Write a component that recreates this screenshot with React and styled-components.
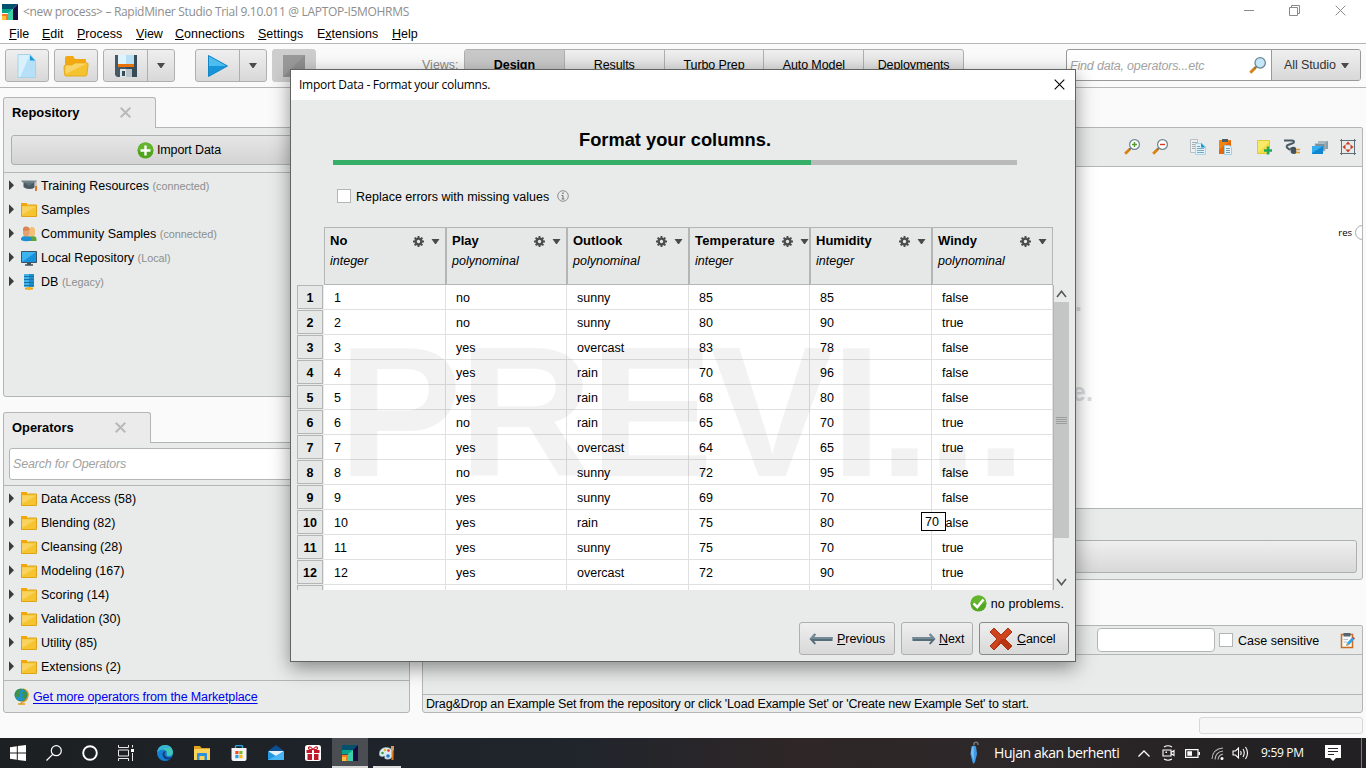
import React from "react";
import styled, { createGlobalStyle, css } from "styled-components";

const LINE = "#b4b6b6";
const PANEL = "#e8ebea";
const SANS = '"Liberation Sans", Arial, sans-serif';
const UI = '"Open Sans", "Noto Sans", sans-serif';

const Global = createGlobalStyle`
  * { box-sizing: border-box; }
  body { margin: 0; overflow: hidden; font-family: ${SANS}; font-size: 12.5px; color: #000; }
  svg { display: block; flex: none; }
`;

const Screen = styled.div`
  position: relative;
  width: 1366px;
  height: 768px;
  overflow: hidden;
  display: flex;
  flex-direction: column;
  background: #fafafa;
  white-space: nowrap;
`;

/* ---------- window chrome ---------- */
const TitleBar = styled.header`
  height: 24px;
  background: #fff;
  display: flex;
  align-items: center;
  padding: 0 20px 0 2px;
  color: #8e8e8e;
`;
const WindowTitle = styled.span`
  font: 12px/24px ${UI};
  letter-spacing: ${(p) => p.$ls || "-0.31px"};
  margin-left: 5px;
  flex: 1;
`;
const WindowControls = styled.div`
  display: flex;
  gap: 35px;
  margin-top: -3px;
`;
const MenuBar = styled.nav`
  height: 20px;
  background: #fff;
  border-bottom: 1px solid ${LINE};
  display: flex;
  padding-left: 9px;
`;
const MenuItem = styled.span`
  width: ${(p) => p.$w}px;
  line-height: 20px;
`;

/* ---------- toolbar ---------- */
const Toolbar = styled.div`
  height: 44px;
  border-bottom: 1px solid ${LINE};
  display: flex;
  align-items: flex-start;
  padding: 5px 5px 0;
`;
const raised = css`
  border: 1px solid #aeb0b0;
  border-radius: 3px;
  background: linear-gradient(#efefef, #d8d8d8);
`;
const ToolButton = styled.div`
  ${raised}
  width: ${(p) => p.$w || 44}px;
  height: 33px;
  margin-right: ${(p) => p.$gap ?? 5}px;
  display: flex;
  align-items: center;
  justify-content: center;
  ${(p) => p.$disabled && css`background: #cdcdcd; border-color: #cdcdcd;`}
`;
const Half = styled.div`
  width: ${(p) => p.$w}px;
  height: 31px;
  display: flex;
  align-items: center;
  justify-content: center;
  & + & { border-left: 1px solid #aeb0b0; }
`;
const ViewsLabel = styled.span`
  width: 42px;
  margin-left: 106px;
  line-height: 33px;
  color: #8a8a8a;
`;
const ViewTabs = styled.div`
  ${raised}
  display: flex;
  width: 500px;
  height: 33px;
  overflow: hidden;
`;
const ViewTab = styled.div`
  flex: 1;
  text-align: center;
  line-height: 30px;
  letter-spacing: -0.1px;
  border-right: 1px solid #aeb0b0;
  &:last-child { border-right: 0; }
  ${(p) => p.$active && css`background: #c8c8c8; font-weight: bold;`}
`;
const GlobalSearch = styled.div`
  display: flex;
  width: 295px;
  height: 32px;
  margin-left: auto;
  border: 1px solid #989a9a;
  border-radius: 3px;
  background: #fff;
  overflow: hidden;
`;
const Placeholder = styled.span`
  font-style: italic;
  letter-spacing: -0.18px;
  color: #a2a2a2;
  flex: 1;
  padding-left: ${(p) => p.$pad}px;
  line-height: ${(p) => p.$lh}px;
`;
const ScopeIcon = styled.div`
  display: flex;
  align-items: center;
`;
const ScopeButton = styled.div`
  width: 89px;
  margin-left: 5px;
  padding-left: 12px;
  display: flex;
  align-items: center;
  gap: 5px;
  line-height: 30px;
  letter-spacing: -0.1px;
  color: #333;
  border-left: 1px solid #989a9a;
  background: linear-gradient(#efefef, #d8d8d8);
`;

/* ---------- docked panels ---------- */
const Workspace = styled.main`
  height: 650px;
  display: flex;
  gap: 12px;
  padding-left: 3px;
`;
const LeftDock = styled.aside`
  width: 407px;
  padding-top: 9px;
  display: flex;
  flex-direction: column;
`;
const RightDock = styled.section`
  width: 941px;
  padding-top: 39px;
  display: flex;
  flex-direction: column;
`;
const DockTab = styled.div`
  position: relative;
  z-index: 1;
  width: ${(p) => p.$w}px;
  height: 31px;
  margin-bottom: -1px;
  padding: 0 24px 2px 8px;
  display: flex;
  align-items: center;
  justify-content: space-between;
  font-size: 12.9px;
  font-weight: bold;
  background: #ebebeb;
  border: 1px solid ${LINE};
  border-bottom: 0;
  border-radius: 3px 3px 0 0;
`;
const Panel = styled.div`
  height: ${(p) => p.$h}px;
  margin-bottom: ${(p) => p.$mb || 0}px;
  background: ${PANEL};
  border: 1px solid ${LINE};
  border-radius: 0 2px 3px 3px;
  display: flex;
  flex-direction: column;
`;
const ImportBar = styled.div`
  height: 45px;
  padding: 7px;
  border-bottom: 1px solid ${LINE};
  display: flex;
  gap: 5px;
`;
const ImportButton = styled.div`
  ${raised}
  background: linear-gradient(#e6e6e6, #d3d3d3);
  width: ${(p) => p.$w}px;
  height: 30px;
  letter-spacing: -0.1px;
  display: flex;
  align-items: center;
  justify-content: center;
  gap: 3px;
`;
const SearchRow = styled.div`
  height: 43px;
  padding: 5px;
  border-bottom: 1px solid ${LINE};
`;
const SearchInput = styled.div`
  height: 32px;
  background: #fff;
  border: 1px solid ${LINE};
  border-radius: 3px;
  display: flex;
`;
const Tree = styled.div`
  flex: 1;
  padding: ${(p) => p.$pt}px 0 0 5px;
`;
const TreeRow = styled.div`
  height: 24px;
  display: flex;
  align-items: center;
  line-height: 24px;
  svg + svg { margin: 0 4px 0 6px; }
`;
const Hint = styled.span`
  margin: 0 0 0 3.500px;
  font-size: 10.8px;
  color: #8c8e8e;
`;
const LinkBar = styled.div`
  height: 32px;
  border-top: 1px solid ${LINE};
  display: flex;
  align-items: center;
  gap: 3px;
  padding-left: 10px;
`;
const Link = styled.a`
  color: #0000ee;
  letter-spacing: -0.12px;
  text-decoration: underline;
  text-underline-offset: 2px;
`;

const IconBar = styled.div`
  height: 39px;
  border-bottom: 1px solid ${LINE};
  display: flex;
  align-items: center;
  justify-content: flex-end;
  gap: 22px;
  padding-right: 6px;
`;
const IconGroup = styled.div`
  display: flex;
  gap: 12px;
`;
const Canvas = styled.div`
  position: relative;
  height: 342px;
  background: #fff;
  border-bottom: 1px solid ${LINE};
  overflow: hidden;
`;
const CanvasHint = styled.span`
  position: absolute;
  left: ${(p) => p.$x}px;
  top: ${(p) => p.$y}px;
  font: bold 25px/30px ${SANS};
  color: #dcdcdc;
`;
const ResultPort = styled.div`
  position: absolute;
  right: -8px;
  top: 58px;
  display: flex;
  align-items: center;
  gap: 3px;
  font: 9.5px/15px ${UI};
`;
const Port = styled.i`
  width: 15px;
  height: 15px;
  border: 1px solid #a8a8a8;
  border-radius: 50%;
`;
const WideButton = styled.div`
  ${raised}
  height: 33px;
  margin: 31px 5px 0;
`;
const FilterRow = styled.div`
  height: 29px;
  border-bottom: 1px solid ${LINE};
  display: flex;
  align-items: center;
  justify-content: flex-end;
  padding-right: 7px;
`;
const FilterInput = styled.div`
  width: 118px;
  height: 24px;
  border: 1px solid ${LINE};
  border-radius: 4px;
  background: #fff;
  margin-right: 4px;
`;
const Checkbox = styled.i`
  width: 14px;
  height: 14px;
  border: 1px solid ${LINE};
  background: #fff;
  margin-right: ${(p) => p.$mr}px;
`;
const Label = styled.span`
  width: ${(p) => p.$w}px;
  padding-top: 1px;
`;
const DropMessage = styled.div`
  height: 17px;
  margin-top: 39px;
  border-top: 1px solid ${LINE};
  padding-left: 3px;
  line-height: 18px;
  letter-spacing: -0.165px;
`;
const StatusBox = styled.div`
  width: 164px;
  height: 17px;
  margin: 4px 0 0 auto;
  border: 1px solid #d8d8d8;
  border-radius: 3px;
  background: #f6f6f6;
`;

/* ---------- dialog ---------- */
const Dialog = styled.section`
  position: absolute;
  z-index: 5;
  left: 290px;
  top: 69px;
  width: 786px;
  height: 593px;
  border: 1px solid #626464;
  background: ${PANEL};
  box-shadow: 0 6px 18px rgba(0, 0, 0, 0.42);
`;
const DialogTitle = styled.div`
  height: 30px;
  background: #fff;
  display: flex;
  align-items: center;
  padding: 0 10px 1px 3px;
`;
const Heading = styled.h1`
  margin: 30px 0 0;
  height: 20px;
  font-size: 18.3px;
  line-height: 20px;
  text-align: center;
  padding-right: 16px;
`;
const Progress = styled.div`
  height: 5px;
  margin: 10px 58px 0 42px;
  background: #bababa;
`;
const ProgressFill = styled.div`
  width: 478px;
  height: 5px;
  background: #35ae67;
`;
const OptionRow = styled.div`
  height: 16px;
  margin: 23px 0 0 46px;
  display: flex;
  align-items: center;
`;
const HeaderRow = styled.div`
  display: flex;
  margin: 23px 0 0 33px;
`;
const HeaderCell = styled.div`
  width: ${(p) => p.$w}px;
  height: 58px;
  border: 1px solid ${LINE};
  background: #e6e8e7;
  padding: 4px ${(p) => (p.$tight ? 0 : 5)}px 0 5px;
`;
const HeaderTop = styled.div`
  display: flex;
  align-items: center;
  height: 19px;
  gap: 7px;
`;
const ColumnName = styled.b`
  flex: 1;
  min-width: 0;
  font-size: 13px;
  line-height: 17px;
  padding-bottom: 2px;
  letter-spacing: ${(p) => (p.$wide ? 0.2 : 0)}px;
`;
const TypeName = styled.div`
  font-style: italic;
  line-height: 21px;
`;
const TableView = styled.div`
  position: relative;
  display: flex;
  height: 305px;
  margin-left: 6px;
  overflow: hidden;
`;
const RowNumbers = styled.div`
  width: 27px;
  flex: none;
`;
const RowNumber = styled.div`
  width: 26px;
  height: 24px;
  margin-bottom: 1px;
  border: 1px solid ${LINE};
  background: #e6e8e7;
  text-align: center;
  line-height: 24px;
  font-weight: bold;
`;
const Cells = styled.div`
  width: 729px;
  background: #fff;
  flex: none;
`;
const Row = styled.div`
  display: flex;
  height: 25px;
  border-bottom: 1px solid #e0e0e0;
`;
const Cell = styled.div`
  width: ${(p) => p.$w}px;
  height: 24px;
  border-right: 1px solid #e0e0e0;
  padding-left: 10px;
  line-height: 26px;
`;
const Watermark = styled.div`
  position: absolute;
  left: 41px;
  top: 2px;
  font-size: 186px;
  line-height: 250px;
  letter-spacing: -3.500px;
  font-weight: bold;
  color: rgba(0, 0, 0, 0.05);
  pointer-events: none;
`;
const ScrollBar = styled.div`
  width: 16px;
  border-left: 1px solid ${LINE};
  display: flex;
  flex-direction: column;
  align-items: center;
`;
const Thumb = styled.div`
  width: 15px;
  height: 236px;
  flex: none;
  background: #c4c6c5;
  display: flex;
  align-items: center;
  justify-content: center;
`;
const ScrollStep = styled.div`
  height: 17px;
  flex: none;
  display: flex;
  align-items: center;
  &:last-child { margin-top: auto; }
`;
const CellTip = styled.div`
  position: absolute;
  left: 630px;
  top: 442px;
  width: 25px;
  height: 19px;
  background: #fff;
  border: 1px solid #000;
  padding-left: 3px;
  line-height: 18px;
`;
const Problems = styled.div`
  height: 17px;
  margin: 5px 11px 0 0;
  display: flex;
  align-items: center;
  justify-content: flex-end;
  gap: 4px;
  letter-spacing: 0.08px;
`;
const Actions = styled.div`
  display: flex;
  justify-content: flex-end;
  gap: 6px;
  margin: 10px 6px 0 0;
`;
const ActionButton = styled.div`
  ${raised}
  width: ${(p) => p.$w}px;
  height: 33px;
  padding-left: 9px;
  display: flex;
  align-items: center;
  gap: ${(p) => (p.$focus ? 4 : 3)}px;
  letter-spacing: -0.06px;
  ${(p) => p.$focus && css`border-color: #888a8a;`}
`;

/* ---------- taskbar ---------- */
const Taskbar = styled.footer`
  height: 30px;
  background: linear-gradient(90deg, #1c2022, #1f242b 30%, #20252c 42%, #2e2627 58%, #2d282a 75%, #222022 95%);
  display: flex;
  align-items: center;
  color: #fff;
`;
const TaskSlot = styled.div`
  width: 36px;
  height: 30px;
  margin-left: ${(p) => p.$ml || 0}px;
  display: flex;
  align-items: center;
  justify-content: center;
  ${(p) => p.$active && css`background: #4a4e52; box-shadow: inset 0 -2px #d8d8d8;`}
  ${(p) => p.$open && css`background: linear-gradient(#dcdcdc, #dcdcdc) 50% 100% / 28px 2px no-repeat;`}
`;
const Tray = styled.div`
  margin-left: auto;
  height: 30px;
  display: flex;
  align-items: center;
`;
const TrayText = styled.span`
  width: ${(p) => p.$w}px;
  margin: 0 ${(p) => p.$mr}px 0 ${(p) => p.$ml}px;
  font: ${(p) => p.$size}px/30px ${UI};
  letter-spacing: ${(p) => p.$ls}px;
`;
const TrayIcon = styled.div`
  width: ${(p) => p.$w}px;
  display: flex;
  justify-content: center;
`;
const ShowDesktop = styled.i`
  width: 5px;
  height: 30px;
  border-left: 1px solid #77797a;
`;

/* ---------- icons ---------- */
const Svg = ({ w = 16, h = w, vb, children }) => (
  <svg width={w} height={h} viewBox={vb || `0 0 ${w} ${h}`} fill="none">{children}</svg>
);
const Logo = ({ s = 16 }) => (
  <Svg w={s} vb="0 0 16 16">
    <path d="M0 0H16L11 5H0Z" fill="#04506f" />
    <path d="M16 0V16H11V5Z" fill="#160b42" />
    <path d="M0 5H11L7 9H0Z" fill="#06a58a" />
    <path d="M11 5V16H6V9Z" fill="#3ecfa8" />
    <path d="M0 10H6V16H0Z" fill="#f47b20" />
    <path d="M0 12H4V16H0Z" fill="#ffc23c" />
  </Svg>
);
const Down = ({ w = 8, h = 5, c = "#4a4a4a" }) => (
  <Svg w={w} h={h} vb="0 0 8 5"><path d="M0 0H8L4.500 5H3.500Z" fill={c} /></Svg>
);
const Expander = () => <Svg w={6} h={12} vb="0 0 6 12"><path d="M0 .3V10.300L5 5.300Z" fill="#3c3c3c" /></Svg>;
const CloseX = ({ s = 11, c = "#b9b9b9", sw = 2 }) => (
  <Svg w={s} vb="0 0 11 11"><path d="M.7 .7L10.3 10.3M10.3 .7L.7 10.3" stroke={c} strokeWidth={sw} /></Svg>
);
const Folder = () => (
  <Svg>
    <path d="M0.5 1.5H5.5V3H15.5V14.5H.5Z" fill="#f5c430" stroke="#dfa118" />
    <path d="M0 1H6V4H0Z" fill="#f2a60c" />
    <path d="M1 4.5H15L1 13Z" fill="#f8d35f" />
  </Svg>
);
const NewFile = () => (
  <Svg w={20} h={24}>
    <path d="M1 .5H13L18.5 6.5V23.5H1Z" fill="#b5e0f7" />
    <path d="M1 .5H13L3 23.5H1Z" fill="#d8f1fc" />
    <path d="M13 .5V6.5H18.5Z" fill="#1b9bd8" />
    <path d="M1 .5H13L18.5 6.5V23.5H1Z" stroke="#a5d4ea" />
  </Svg>
);
const OpenFolder = () => (
  <Svg w={26} h={22}>
    <path d="M2 3Q2 1 4 1H10L12 4H22Q23 4 23 5V12H2Z" fill="#f3a80f" />
    <path d="M3 10H9L12 8H24Q25.500 8 25 10L24 19Q24 21 22 21H3Q1.500 21 1.500 19L1 12Q1 10 3 10Z" fill="#f5c32f" stroke="#e6ab1d" />
    <path d="M3 10.500H9L12 8.500H24L2.500 19Z" fill="#f9d567" />
  </Svg>
);
const Save = () => (
  <Svg w={22} h={22}>
    <path d="M0 0H22V22H2L0 20Z" fill="#455a66" />
    <path d="M11 0H22V22H11Z" fill="#384c58" />
    <path d="M3 0H19V10H3Z" fill="#dff3fc" /><path d="M11 0H19V9H11Z" fill="#b7e0f5" />
    <path d="M3 9H19V12H3Z" fill="#e8730b" />
    <path d="M5 14H17V22H5Z" fill="#dfe5e8" /><path d="M11 14H17V22H11Z" fill="#b9c4ca" />
    <path d="M7 16H10V21H7Z" fill="#384c58" />
  </Svg>
);
const Play = () => (
  <Svg w={20} h={22}>
    <path d="M.5 .5L19.500 11L.5 21.500Z" fill="#1595da" />
    <path d="M.5 .5L19.500 11H.5Z" fill="#4dbdf0" />
    <path d="M.5 .5L19.500 11L.5 21.500Z" stroke="#1485c4" />
  </Svg>
);
const Stop = () => <Svg w={22} h={22}><path d="M0 0H22V22H0Z" fill="#8f8f8f" /><path d="M0 0H22L0 22Z" fill="#9a9a9a" /></Svg>;
const Lens = ({ mark, fill = "#fff", w = 16 }) => (
  <Svg w={w} vb="0 0 16 16">
    <path d="M1.200 14.800L6.200 9.800" stroke="#d98211" strokeWidth="2.800" />
    <path d="M5.200 10.800L7 9" stroke="#66747e" strokeWidth="1.500" />
    <circle cx="10.500" cy="5.500" r="4.900" fill={fill} stroke="#6c8390" strokeWidth="1.200" />
    {mark && <path d={mark === "+" ? "M8 5.500H13M10.500 3V8" : "M8 5.500H13"} stroke={mark === "+" ? "#4f9a28" : "#d33a22"} strokeWidth="1.400" />}
  </Svg>
);
const Copy = () => (
  <Svg>
    <path d="M.5 .5H7.500V13.500H.5Z" fill="#f0f0f0" stroke="#b6c0c4" />
    <path d="M2 3.500H7M2 5.500H7M2 7.500H7M2 9.500H7" stroke="#a6aeb2" />
    <path d="M5.500 4.500H12L15.500 8V15.500H5.500Z" fill="#dff2fb" stroke="#a8d5e8" />
    <path d="M11 4V8.500H15.500Z" fill="#1a97d4" />
    <path d="M7 7.500H10M7 9.500H14M7 11.500H14M7 13.500H14" stroke="#7ea9bd" />
  </Svg>
);
const Paste = () => (
  <Svg>
    <path d="M1 1H13V15H1Z" fill="#f2850f" /><path d="M1 11L13 1V15H1Z" fill="#e5690b" />
    <path d="M4 0H10V3H4Z" fill="#4c5d67" />
    <path d="M6.500 6.500H11.500L13.500 8.500V15.500H6.500Z" fill="#e7f5fc" stroke="#9fcde2" />
    <path d="M8 9.500H12M8 11.500H12M8 13.500H12" stroke="#7697a6" />
  </Svg>
);
const Note = () => (
  <Svg>
    <path d="M1.500 1.500H13.500V14.500H1.500Z" fill="#f7ea68" stroke="#dfc938" />
    <path d="M2 14L13 3V14Z" fill="#f2dc43" />
    <path d="M8 11.500H16M12 7.500V15.500" stroke="#22a85a" strokeWidth="2.400" />
  </Svg>
);
const Plug = () => (
  <Svg>
    <path d="M0 1.500H8Q10 1.500 10 3Q10 4 8 4.500L4 6Q2 7 3 8.500L6 11" stroke="#4a5b65" strokeWidth="2" />
    <path d="M6 9Q10 6.500 12 9L12.500 14Q10 16 7 14Z" fill="#43545e" />
    <path d="M12 10.500H16M12 13.500H16" stroke="#e19a2a" strokeWidth="1.400" />
  </Svg>
);
const Layers = () => (
  <Svg>
    <path d="M6 2H16V10H6Z" fill="#8b9da7" /><path d="M6 2H16L6 9Z" fill="#a9b8c0" />
    <path d="M3 4.500H13V12H3Z" fill="#77909d" stroke="#bcc7cc" strokeWidth=".7" />
    <path d="M0 7H11V15H0Z" fill="#0f86cf" /><path d="M0 7H11L0 14Z" fill="#35aeee" />
  </Svg>
);
const Fit = () => (
  <Svg>
    <path d="M1.500 0V16M14.500 0V16M0 1.500H16M0 14.500H16" stroke="#5c6f7a" />
    <path d="M8 2.500L10.500 5.500H5.500ZM8 13.500L10.500 10.500H5.500ZM2.500 8L5.500 5.500V10.500ZM13.500 8L10.500 5.500V10.500Z" fill="#c93b1e" />
  </Svg>
);
const ClipEdit = () => (
  <Svg w={15} h={17}>
    <path d="M1.500 2.500H12.500V15.500H1.500Z" fill="#f7f9fa" stroke="#cc6c20" strokeWidth="1.500" />
    <path d="M3.500 1H10.500V4.500H3.500Z" fill="#53666f" />
    <path d="M3.500 7.500H8M3.500 10H7" stroke="#b6c2c8" />
    <path d="M6 14L7 11L12.500 5L14.500 7L9 13Z" fill="#2fa4e4" /><path d="M6 14L7 11L9 13Z" fill="#e9a83a" />
    <path d="M12.500 5L14.500 7" stroke="#d04a2c" strokeWidth="1.500" />
  </Svg>
);
const PlusDisc = () => (
  <Svg w={17} h={17}><circle cx="8.500" cy="8.500" r="8" fill="#51a51e" /><path d="M.5 8.500a8 8 0 0 1 16 0Z" fill="#63b52b" /><path d="M3.500 8.500H13.500M8.500 3.500V13.500" stroke="#fff" strokeWidth="2.400" /></Svg>
);
const CheckDisc = () => (
  <Svg w={17} h={17}><circle cx="8.500" cy="8.500" r="8" fill="#53a723" /><path d="M.5 8.500a8 8 0 0 1 16 0Z" fill="#63b52b" /><path d="M3.500 8.500L7.200 12L13.500 4.500" stroke="#fff" strokeWidth="2.600" /></Svg>
);
const Cap = () => (
  <Svg>
    <path d="M0 2.500H16L14.500 4.500H1.500Z" fill="#74848b" />
    <path d="M2.500 4.500H13.500V9.500Q12 11 8 11Q4.500 11 2.500 9Z" fill="#495a63" /><path d="M2.500 4.500H13.500L8 8Z" fill="#5e707a" />
    <path d="M15 3V9" stroke="#c9a283" strokeWidth="1" /><path d="M14 8H16V13H14Z" fill="#e27a2e" />
  </Svg>
);
const People = () => (
  <Svg>
    <path d="M7 15V12Q7 10 11 10Q15.500 10 15.500 13V15Z" fill="#5da23b" />
    <rect x="8" y="1" width="6" height="9.500" rx="3" fill="#f3c07a" />
    <path d="M0 13Q0 10 5 10Q10 10 10.500 13V14Q5 16.500 0 14Z" fill="#1b8fd3" />
    <rect x="2" y="1" width="6.500" height="9.500" rx="3" fill="#e3a070" /><path d="M2 5Q1.500 .5 5 .5Q8.500 .5 8.500 4Z" fill="#d78352" />
  </Svg>
);
const Monitor = () => (
  <Svg>
    <path d="M.5 1.500H15.500V12.500H.5Z" fill="#1492dc" stroke="#40535e" /><path d="M1 2H15L1 12Z" fill="#3db4f0" />
    <path d="M6 13H10V15H6Z" fill="#40535e" /><path d="M4 15H12" stroke="#40535e" strokeWidth="1.500" />
  </Svg>
);
const Database = () => (
  <Svg>
    <path d="M3 0H13V13H3Z" fill="#1f8fcd" /><path d="M3 0H8V13H3Z" fill="#43b3ea" />
    <path d="M3 2.500H13M3 5.500H13M3 8.500H13M3 11.500H13" stroke="#1474ae" />
    <path d="M4 14.500H12" stroke="#eaa01a" strokeWidth="2" /><path d="M6 13H10V16H6Z" fill="#f1b427" />
  </Svg>
);
const Globe = () => (
  <Svg w={16} h={17}>
    <path d="M9 1Q15 3 13.800 8Q13 13 8 14" stroke="#e09a1b" strokeWidth="1.600" />
    <path d="M4 16H11M7.500 14V16" stroke="#e09a1b" strokeWidth="1.600" />
    <circle cx="7" cy="7" r="6.300" fill="#2191d6" />
    <path d="M2 3Q6 -.5 7 2L5 5L6 7L4 10Q1 8 1 6ZM9 3L12 4.500L13 8L10 11L8 9L9 7L8 5Z" fill="#3f9443" />
    <circle cx="7" cy="7" r="6" stroke="#2e8a58" strokeWidth=".8" />
  </Svg>
);
const Gear = () => (
  <Svg w={11} h={11}>
    <circle cx="5.500" cy="5.500" r="2.900" stroke="#4c4c4c" strokeWidth="2.400" />
    <path d="M5.500 0V2M5.500 9V11M0 5.500H2M9 5.500H11M1.600 1.600L3 3M8 8L9.400 9.400M9.400 1.600L8 3M3 8L1.600 9.400" stroke="#4c4c4c" strokeWidth="1.900" />
  </Svg>
);
const Info = () => (
  <Svg w={12} h={12}><circle cx="6" cy="6" r="5.300" stroke="#8d8f8f" /><path d="M6 5.500V9M4.500 5.500H6M4.500 9H7.500" stroke="#777" strokeWidth="1.100" /><path d="M5.300 2.500H6.700V4H5.300Z" fill="#777" /></Svg>
);
const Arrow = ({ flip }) => (
  <Svg w={25} h={12}>
    <g transform={flip ? "translate(25 0) scale(-1 1)" : undefined}>
      <path d="M5.500 .5L.5 6L5.500 11.500L7 10.500L5 8H23.500V4H5L7 1.500Z" fill="#566c78" />
      <path d="M5.500 .5L.5 6H23.500V4H5L7 1.500Z" fill="#748a96" />
    </g>
  </Svg>
);
const RedX = () => (
  <Svg w={24} h={24}>
    <path d="M5 1L12 8L19 1L23 5L16 12L23 19L19 23L12 16L5 23L1 19L8 12L1 5Z" fill="#cf4420" stroke="#a93412" />
    <path d="M16 12L22.500 19L19 22.500L12 15.500L5 22.500L12 12Z" fill="#b93511" />
  </Svg>
);

/* taskbar drawings */
const Windows = () => <Svg><path d="M0 2.200L6.800 1.200V7.500H0ZM7.800 1L16 0V7.500H7.800ZM0 8.500H6.800V14.800L0 13.800ZM7.800 8.500H16V16L7.800 15Z" fill="#fff" /></Svg>;
const TaskSearch = () => <Svg><circle cx="10.300" cy="5.700" r="5" stroke="#fff" strokeWidth="1.200" /><path d="M6.700 9.300L.5 15.500" stroke="#fff" strokeWidth="1.200" /></Svg>;
const Cortana = () => <Svg><circle cx="8" cy="8" r="6.800" stroke="#fff" strokeWidth="1.900" /></Svg>;
const TaskView = () => <Svg><path d="M.5 0V2.500H10.500V0M.5 5H10.500V11H.5ZM.5 16V13.500H10.500V16M14.500 0V2.500M14.500 8V16" stroke="#e8e8e8" /><path d="M13 4H16V7H13Z" fill="#fff" /></Svg>;
const Edge = () => (
  <Svg>
    <circle cx="8" cy="8" r="8" fill="#1681d3" />
    <path d="M.2 7Q1.500 0 8.200 0Q15 .2 16 7Q16 11 11.500 11Q9 11 10 8.500Q10 5 6 4.500Q2 4.300 .2 7Z" fill="#3fc6b4" />
    <path d="M.2 7Q1.500 2 7 1Q13 0 13.500 3Q7 2 .2 7Z" fill="#34b1dd" />
    <path d="M5.500 9Q5.500 15 12.500 14.500Q15 13 15.500 11.500Q9.500 14 7.500 9.500Q7.500 7 9 6Q6 6 5.500 9Z" fill="#123f83" />
  </Svg>
);
const Explorer = () => (
  <Svg><path d="M0 1H6L7.500 3H16V5H0Z" fill="#e2a21c" /><path d="M0 4H16V15H0Z" fill="#fbd25c" /><path d="M3 15V9Q3 8 4 8H12Q13 8 13 9V15H10.500V11H5.500V15Z" fill="#2e8fda" /></Svg>
);
const Store = () => (
  <Svg><path d="M4.500 4V1.500Q4.500 .5 6 .5H10Q11.500 .5 11.500 1.500V4" stroke="#2aa5dc" strokeWidth="1.400" /><path d="M.5 3H15.500V14Q15.500 16 13.500 16H2.500Q.5 16 .5 14Z" fill="#f5f5f5" />
    <path d="M4.300 6H7.500V9.200H4.300Z" fill="#ee5024" /><path d="M8.300 6H11.500V9.200H8.300Z" fill="#7fba28" /><path d="M4.300 10H7.500V13.200H4.300Z" fill="#22a1e6" /><path d="M8.300 10H11.500V13.200H8.300Z" fill="#f9b716" /></Svg>
);
const Mail = () => <Svg><path d="M0 6L8 0L16 6V15H0Z" fill="#0e4f94" /><path d="M1 6H15V11H1Z" fill="#e9f2f8" /><path d="M0 6L8 11L16 6V15H0Z" fill="#2597e3" /><path d="M0 15L9 10.300L16 6V15Z" fill="#48b4f1" /></Svg>;
const Gift = () => (
  <Svg><rect width="16" height="16" rx="2.500" fill="#fff" /><path d="M7.500 4.500Q3 5 3.500 2.500Q5 .5 8 4.500Q11 .5 12.500 2.500Q13 5 8.500 4.500" stroke="#c8192e" strokeWidth="1.200" />
    <path d="M1.500 5H7V8H1.500ZM9 5H14.500V8H9ZM2.500 9H7V15H2.500ZM9 9H13.500V15H9Z" fill="#bd182b" /></Svg>
);
const Paint = () => (
  <Svg>
    <path d="M7 2.500Q14 2.500 14 9Q13.500 15 7 14Q5 13.500 6 11.500Q5.500 10.500 3.500 11.500Q.3 12 .3 8.500Q1 3 7 2.500Z" fill="#dcebf2" stroke="#9ebdcd" strokeWidth=".6" />
    <circle cx="3.500" cy="8" r="1.300" fill="#3d9b42" /><circle cx="6" cy="5" r="1.300" fill="#e9b620" /><circle cx="9.500" cy="5.500" r="1.300" fill="#d83724" /><circle cx="9" cy="11" r="1.800" fill="#2778c8" />
    <path d="M13.500 6V15" stroke="#df7d1e" strokeWidth="2" /><path d="M12 1H15V5L13.500 7L12 5Z" fill="#d99b58" />
  </Svg>
);
const Umbrella = () => (
  <Svg w={12} h={24}><path d="M6 4V2.500Q6.300 1 8.500 1.300Q10.300 1.700 10 4" stroke="#707479" strokeWidth="1.600" /><path d="M3.500 5.500L6 4.500L8 5.500L9 13L7 21L5.500 23L4.500 21L2.500 13Z" fill="#3f9be5" /><path d="M4 6L5.500 5L6 20L5 18L3 12Z" fill="#79c2f8" /></Svg>
);
const Chevron = ({ w = 12, h = 7, c = "#fff" }) => (
  <Svg w={w} h={h} vb="0 0 12 7"><path d="M.5 6.500L6 1L11.500 6.500" stroke={c} strokeWidth={1.3} /></Svg>
);
const ScrollChevron = ({ flip }) => (
  <Svg w={11} h={8}><path d={flip ? "M1 1L5.500 6.800L10 1" : "M1 7L5.500 1.200L10 7"} stroke="#555" strokeWidth="1.500" /></Svg>
);
const MeetNow = () => <Svg w={13} h={16}><path d="M2 2Q6 -.5 10 2M2 14Q6 16.500 10 14M1 5H9V11H1ZM9 7.500L12 5.500V10.500L9 8.500" stroke="#fff" strokeWidth="1.100" /><path d="M3.500 6.500H5V8H3.500Z" fill="#fff" /></Svg>;
const Battery = () => <Svg w={15} h={9}><path d="M.6 .6H13V8.400H.6Z" stroke="#fff" strokeWidth="1.200" /><path d="M2.300 2.300H7V6.700H2.300ZM13.500 3H15V6H13.500Z" fill="#fff" /></Svg>;
const Wifi = () => <Svg w={13} h={13}><path d="M1 12Q1.500 2 12 1M4 12.500Q4.500 5 12 4M7 12.500Q7.500 8 12 7" stroke="#b9b9b9" strokeWidth="1.100" /><circle cx="11" cy="11.500" r="1.500" fill="#fff" /></Svg>;
const Volume = () => <Svg w={17} h={14}><path d="M1 5H3.500L6.500 2V12L3.500 9H1ZM8.500 5Q9.800 7 8.500 9M11 3Q13.500 7 11 11M13.500 1Q17.500 7 13.500 13" stroke="#fff" strokeWidth="1.100" /></Svg>;
const Notice = () => <Svg><path d="M0 0H16V13H11L8 16L5 13H0Z" fill="#fff" /><path d="M3 3.500H13M3 6.500H13M3 9.500H9" stroke="#29272a" /></Svg>;

/* ---------- data ---------- */
const menus = [["F", "ile", 33], ["E", "dit", 35], ["P", "rocess", 59], ["V", "iew", 39], ["C", "onnections", 83], ["S", "ettings", 59], ["E", "xtensions", 75], ["H", "elp", 40]];
const repositories = [
  [Cap, "Training Resources", "(connected)"], [Folder, "Samples"], [People, "Community Samples", "(connected)"],
  [Monitor, "Local Repository", "(Local)"], [Database, "DB", "(Legacy)"],
];
const operators = ["Data Access (58)", "Blending (82)", "Cleansing (28)", "Modeling (167)", "Scoring (14)", "Validation (30)", "Utility (85)", "Extensions (2)"];
const columns = [["No", "integer", 122], ["Play", "polynominal", 121], ["Outlook", "polynominal", 122], ["Temperature", "integer", 121], ["Humidity", "integer", 122], ["Windy", "polynominal", 121]];
const rows = [
  [1, "no", "sunny", 85, 85, "false"], [2, "no", "sunny", 80, 90, "true"], [3, "yes", "overcast", 83, 78, "false"],
  [4, "yes", "rain", 70, 96, "false"], [5, "yes", "rain", 68, 80, "false"], [6, "no", "rain", 65, 70, "true"],
  [7, "yes", "overcast", 64, 65, "true"], [8, "no", "sunny", 72, 95, "false"], [9, "yes", "sunny", 69, 70, "false"],
  [10, "yes", "rain", 75, 80, "false"], [11, "yes", "sunny", 75, 70, "true"], [12, "yes", "overcast", 72, 90, "true"],
  ["", "", "", "", "", ""],
];

const ImportDialog = () => (
  <Dialog>
    <DialogTitle>
      <WindowTitle $ls="-0.28px">Import Data - Format your columns.</WindowTitle>
      <CloseX c="#000" sw={1.1} />
    </DialogTitle>
    <Heading>Format your columns.</Heading>
    <Progress><ProgressFill /></Progress>
    <OptionRow>
      <Checkbox $mr={5} />
      <Label $w={201}>Replace errors with missing values</Label>
      <Info />
    </OptionRow>
    <HeaderRow>
      {columns.map(([name, type, w]) => (
        <HeaderCell key={name} $w={w} $tight={name === "Temperature"}>
          <HeaderTop><ColumnName $wide={name === "Temperature"}>{name}</ColumnName><Gear /><Down w={9} /></HeaderTop>
          <TypeName>{type}</TypeName>
        </HeaderCell>
      ))}
    </HeaderRow>
    <TableView>
      <RowNumbers>{rows.map((r, i) => <RowNumber key={i}>{r[0]}</RowNumber>)}</RowNumbers>
      <Cells>
        {rows.map((r, i) => (
          <Row key={i}>{r.map((v, c) => <Cell key={c} $w={columns[c][2]}>{v}</Cell>)}</Row>
        ))}
      </Cells>
      <ScrollBar>
        <ScrollStep><ScrollChevron /></ScrollStep>
        <Thumb><Svg w={11} h={7}><path d="M0 .5H11M0 2.500H11M0 4.500H11M0 6.500H11" stroke="#9c9e9d" /></Svg></Thumb>
        <ScrollStep><ScrollChevron flip /></ScrollStep>
      </ScrollBar>
      <Watermark>PREVI...</Watermark>
    </TableView>
    <CellTip>70</CellTip>
    <Problems><CheckDisc />no problems.</Problems>
    <Actions>
      <ActionButton $w={96}><Arrow /><span><u>P</u>revious</span></ActionButton>
      <ActionButton $w={72}><Arrow flip /><span><u>N</u>ext</span></ActionButton>
      <ActionButton $w={90} $focus><RedX /><span><u>C</u>ancel</span></ActionButton>
    </Actions>
  </Dialog>
);

export default function App() {
  return (
    <Screen>
      <Global />
      <TitleBar>
        <Logo />
        <WindowTitle>&lt;new process&gt; – RapidMiner Studio Trial 9.10.011 @ LAPTOP-I5MOHRMS</WindowTitle>
        <WindowControls>
          <Svg w={11}><path d="M1 5.500H11" stroke="#8a8a8a" /></Svg>
          <Svg w={11}><path d="M.5 2.500H8.500V10.500H.5ZM2.500 2V.5H10.500V8.500H9" stroke="#8a8a8a" /></Svg>
          <CloseX c="#8a8a8a" sw={1} />
        </WindowControls>
      </TitleBar>
      <MenuBar>
        {menus.map(([key, rest, w]) => (
          <MenuItem key={rest} $w={w}>
            {rest === "xtensions" ? <>E<u>x</u>tensions</> : <><u>{key}</u>{rest}</>}
          </MenuItem>
        ))}
      </MenuBar>
      <Toolbar>
        <ToolButton><NewFile /></ToolButton>
        <ToolButton><OpenFolder /></ToolButton>
        <ToolButton $w={72} $gap={20}><Half $w={43}><Save /></Half><Half $w={27}><Down /></Half></ToolButton>
        <ToolButton $w={72}><Half $w={43}><Play /></Half><Half $w={27}><Down /></Half></ToolButton>
        <ToolButton $disabled $gap={0}><Stop /></ToolButton>
        <ViewsLabel>Views:</ViewsLabel>
        <ViewTabs>
          {["Design", "Results", "Turbo Prep", "Auto Model", "Deployments"].map((t, i) => <ViewTab key={t} $active={i === 0}>{t}</ViewTab>)}
        </ViewTabs>
        <GlobalSearch>
          <Placeholder $pad={3} $lh={32}>Find data, operators...etc</Placeholder>
          <ScopeIcon><Lens w={17} fill="#c3e7f8" /></ScopeIcon>
          <ScopeButton>All Studio <Down /></ScopeButton>
        </GlobalSearch>
      </Toolbar>
      <Workspace>
        <LeftDock>
          <DockTab $w={153}>Repository<CloseX /></DockTab>
          <Panel $h={270} $mb={15}>
            <ImportBar>
              <ImportButton $w={336}><PlusDisc />Import Data</ImportButton>
              <ImportButton $w={50}><Down /></ImportButton>
            </ImportBar>
            <Tree $pt={1}>
              {repositories.map(([Icon, name, hint]) => (
                <TreeRow key={name}><Expander /><Icon />{name}{hint && <Hint>{hint}</Hint>}</TreeRow>
              ))}
            </Tree>
          </Panel>
          <DockTab $w={148}>Operators<CloseX /></DockTab>
          <Panel $h={271}>
            <SearchRow><SearchInput><Placeholder $pad={3} $lh={31}>Search for Operators</Placeholder></SearchInput></SearchRow>
            <Tree $pt={1}>
              {operators.map((name) => <TreeRow key={name}><Expander /><Folder />{name}</TreeRow>)}
            </Tree>
            <LinkBar><Globe /><Link>Get more operators from the Marketplace</Link></LinkBar>
          </Panel>
        </LeftDock>
        <RightDock>
          <Panel $h={453} $mb={45}>
            <IconBar>
              <IconGroup><Lens mark="+" /><Lens mark="-" /></IconGroup>
              <IconGroup><Copy /><Paste /></IconGroup>
              <IconGroup><Note /><Plug /><Layers /><Fit /></IconGroup>
            </IconBar>
            <Canvas>
              <CanvasHint $x={652} $y={120}>.</CanvasHint>
              <CanvasHint $x={649} $y={210}>e.</CanvasHint>
              <ResultPort>res<Port /></ResultPort>
            </Canvas>
            <WideButton />
          </Panel>
          <Panel $h={88}>
            <FilterRow>
              <FilterInput />
              <Checkbox $mr={5} />
              <Label $w={102}>Case sensitive</Label>
              <ClipEdit />
            </FilterRow>
            <DropMessage>Drag&amp;Drop an Example Set from the repository or click 'Load Example Set' or 'Create new Example Set' to start.</DropMessage>
          </Panel>
          <StatusBox />
        </RightDock>
      </Workspace>
      <Taskbar>
        <TaskSlot><Windows /></TaskSlot>
        <TaskSlot><TaskSearch /></TaskSlot>
        <TaskSlot><Cortana /></TaskSlot>
        <TaskSlot><TaskView /></TaskSlot>
        <TaskSlot $ml={3}><Edge /></TaskSlot>
        <TaskSlot $ml={1}><Explorer /></TaskSlot>
        <TaskSlot $ml={1}><Store /></TaskSlot>
        <TaskSlot $ml={1}><Mail /></TaskSlot>
        <TaskSlot $ml={1}><Gift /></TaskSlot>
        <TaskSlot $ml={1} $active><Logo /></TaskSlot>
        <TaskSlot $ml={1} $open><Paint /></TaskSlot>
        <Tray>
          <Umbrella />
          <TrayText $w={125} $ml={14} $mr={12} $size={14} $ls={-0.42}>Hujan akan berhenti</TrayText>
          <TrayIcon $w={26}><Chevron /></TrayIcon>
          <TrayIcon $w={23}><MeetNow /></TrayIcon>
          <TrayIcon $w={25}><Battery /></TrayIcon>
          <TrayIcon $w={24}><Wifi /></TrayIcon>
          <TrayIcon $w={23}><Volume /></TrayIcon>
          <TrayText $w={44} $ml={9} $mr={20} $size={12} $ls={-0.3}>9:59 PM</TrayText>
          <Notice />
          <TrayIcon $w={20} />
          <ShowDesktop />
        </Tray>
      </Taskbar>
      <ImportDialog />
    </Screen>
  );
}
